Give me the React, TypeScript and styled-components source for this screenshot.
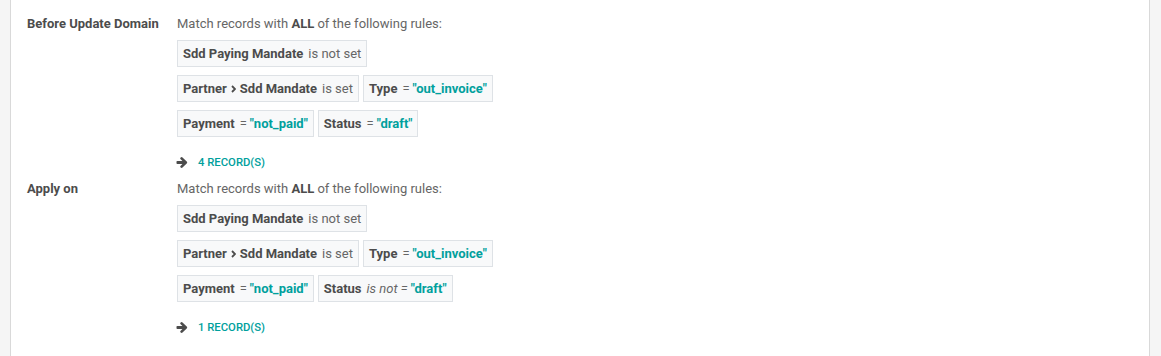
import styled, { createGlobalStyle } from "styled-components";

const GlobalStyle = createGlobalStyle`
  html, body {
    margin: 0;
    padding: 0;
    background: #f5f5f5;
    font-family: Roboto, "Noto Sans", "Liberation Sans", sans-serif;
    font-size: 13px;
    color: #666666;
  }
`;

const Sheet = styled.div`
  margin: 0 11px 0 10px;
  min-height: 356px;
  box-sizing: border-box;
  background: #ffffff;
  border-left: 1px solid #d9d9d9;
  border-right: 1px solid #d9d9d9;
  padding: 14px 16px 0 16px;
  display: flex;
  flex-direction: column;
  gap: 7px;
`;

const FieldRow = styled.div`
  display: flex;
  align-items: flex-start;
`;

const FieldLabel = styled.div`
  width: 150px;
  flex: none;
  line-height: 20px;
  font-weight: 700;
  color: #4c4c4c;
`;

const FieldValue = styled.div`
  display: flex;
  flex-direction: column;
  align-items: flex-start;
`;

const MatchLine = styled.div`
  line-height: 20px;
  color: #666666;

  b {
    color: #4c4c4c;
  }
`;

const RuleList = styled.div`
  margin-top: 6px;
  display: flex;
  flex-direction: column;
  gap: 8px;
`;

const RuleRow = styled.div`
  display: flex;
  gap: 4px;
`;

const Rule = styled.div`
  height: 27px;
  box-sizing: border-box;
  display: flex;
  align-items: center;
  padding: 0 5px;
  background: #f8f9fa;
  border: 1px solid #dee2e6;
  white-space: nowrap;
`;

const Field = styled.span`
  font-weight: 700;
  color: #4c4c4c;
  display: inline-flex;
  align-items: center;
`;

const PathPart = styled.span`
  display: inline-flex;
  align-items: center;
`;

const Operator = styled.span<{ $italic?: boolean }>`
  margin-left: 5px;
  color: #666666;
  font-style: ${(p) => (p.$italic ? "italic" : "normal")};
`;

const Value = styled.span`
  margin-left: 3px;
  font-weight: 700;
  color: #00a09d;
`;

const Chevron = styled.svg`
  margin: 0 4px;
  width: 5px;
  height: 8px;
`;

const RecordsLink = styled.div`
  margin-top: 15px;
  height: 20px;
  display: flex;
  align-items: center;
  gap: 10px;
  font-size: 11.3px;
  font-weight: 500;
  color: #00a09d;
  text-transform: uppercase;
`;

const ArrowIcon = styled.svg`
  width: 12px;
  height: 11px;
  margin-left: -1px;
  color: #4c4c4c;
`;

type RuleDef = {
  path: string[];
  op: string;
  italic?: boolean;
  value?: string;
};

const ChevronRight = () => (
  <Chevron viewBox="0 0 5 8">
    <path d="M1 1 L4 4 L1 7" fill="none" stroke="currentColor" strokeWidth="1.8" />
  </Chevron>
);

const Arrow = () => (
  <ArrowIcon viewBox="0 0 12 11">
    <rect x="0.5" y="4" width="8" height="3" rx="0.8" fill="currentColor" />
    <path
      d="M5.6 1.4 L9.8 5.5 L5.6 9.6"
      fill="none"
      stroke="currentColor"
      strokeWidth="2.6"
      strokeLinecap="round"
      strokeLinejoin="round"
    />
  </ArrowIcon>
);

function RuleChip({ rule }: { rule: RuleDef }) {
  return (
    <Rule>
      <Field>
        {rule.path.map((p, i) => (
          <PathPart key={p}>
            {i > 0 && <ChevronRight />}
            {p}
          </PathPart>
        ))}
      </Field>
      <Operator $italic={rule.italic}>{rule.op}</Operator>
      {rule.value && <Value>"{rule.value}"</Value>}
    </Rule>
  );
}

function DomainField({
  label,
  rows,
  count,
}: {
  label: string;
  rows: RuleDef[][];
  count: number;
}) {
  return (
    <FieldRow>
      <FieldLabel>{label}</FieldLabel>
      <FieldValue>
        <MatchLine>
          Match records with <b>ALL</b> of the following rules:
        </MatchLine>
        <RuleList>
          {rows.map((row, i) => (
            <RuleRow key={i}>
              {row.map((r, j) => (
                <RuleChip key={j} rule={r} />
              ))}
            </RuleRow>
          ))}
        </RuleList>
        <RecordsLink>
          <Arrow />
          {count} record(s)
        </RecordsLink>
      </FieldValue>
    </FieldRow>
  );
}

const commonRows = (statusNot: boolean): RuleDef[][] => [
  [{ path: ["Sdd Paying Mandate"], op: "is not set" }],
  [
    { path: ["Partner", "Sdd Mandate"], op: "is set" },
    { path: ["Type"], op: "=", value: "out_invoice" },
  ],
  [
    { path: ["Payment"], op: "=", value: "not_paid" },
    statusNot
      ? { path: ["Status"], op: "is not =", italic: true, value: "draft" }
      : { path: ["Status"], op: "=", value: "draft" },
  ],
];

export default function App() {
  return (
    <>
      <GlobalStyle />
      <Sheet>
        <DomainField label="Before Update Domain" rows={commonRows(false)} count={4} />
        <DomainField label="Apply on" rows={commonRows(true)} count={1} />
      </Sheet>
    </>
  );
}
